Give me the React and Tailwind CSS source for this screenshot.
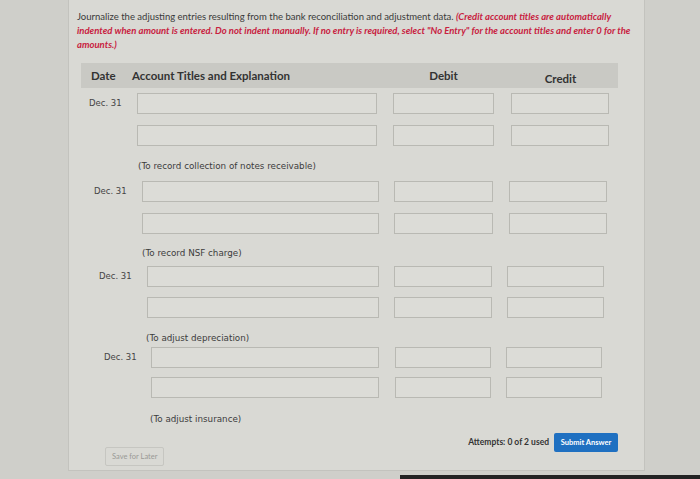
import React from 'react';

const entries = [
    {
        caption: '(To record collection of notes receivable)',
        top: 'mt-[5px]',
        gap: 'mt-[11px]',
        capTop: 'mt-[10px]',
        date: 'pl-[8px]',
        account: 'ml-[5px] w-[240px]',
        debit: 'ml-[9px] w-[101px]',
        credit: 'ml-[8px] w-[98px]',
        indent: 'pl-[6px]',
    },
    {
        caption: '(To record NSF charge)',
        top: 'mt-[11px]',
        gap: 'mt-[11px]',
        capTop: 'mt-[9px]',
        date: 'pl-[13px]',
        account: 'ml-[10px] w-[237px]',
        debit: 'ml-[10px] w-[99px]',
        credit: 'ml-[6px] w-[98px]',
        indent: 'pl-[10px]',
    },
    {
        caption: '(To adjust depreciation)',
        top: 'mt-[9px]',
        gap: 'mt-[10px]',
        capTop: 'mt-[10px]',
        date: 'pl-[18px]',
        account: 'ml-[15px] w-[232px]',
        debit: 'ml-[10px] w-[98px]',
        credit: 'ml-[4px] w-[97px]',
        indent: 'pl-[14px]',
    },
    {
        caption: '(To adjust insurance)',
        top: 'mt-[5px]',
        gap: 'mt-[9px]',
        capTop: 'mt-[11px]',
        date: 'pl-[23px]',
        account: 'ml-[19px] w-[228px]',
        debit: 'ml-[11px] w-[96px]',
        credit: 'ml-[3px] w-[96px]',
        indent: 'pl-[18px]',
    },
];

const Field = ({ className }) => (
    <div className={`h-[21px] border border-[#b9b9b3] bg-[#dcdcd7] ${className}`} />
);

const Row = ({ entry, date }) => (
    <div className="grid grid-cols-[51px_252px_119px_115px] h-[21px] items-center">
        <div className={`${entry.date} whitespace-nowrap text-[8.5px] text-[#444] font-['DejaVu_Sans',sans-serif]`}>
            {date}
        </div>
        <div><Field className={entry.account} /></div>
        <div><Field className={entry.debit} /></div>
        <div><Field className={entry.credit} /></div>
    </div>
);

const Entry = ({ entry }) => (
    <div className={entry.top}>
        <Row entry={entry} date="Dec. 31" />
        <div className={entry.gap}>
            <Row entry={entry} date="" />
        </div>
        <div className={`${entry.capTop} h-[14px] leading-[14px] ml-[51px]`}>
            <span className={`${entry.indent} whitespace-nowrap text-[8.75px] text-[#3c3c3c] font-['DejaVu_Sans',sans-serif]`}>
                {entry.caption}
            </span>
        </div>
    </div>
);

export default function App() {
    return (
        <div className="w-[700px] h-[479px] overflow-hidden bg-[#cfcfca] flex flex-col font-['Lato',sans-serif]">
            <div className="ml-[68px] w-[577px] h-[471px] bg-[#d9d9d4] border-x border-b border-[#c3c3be] pl-[8px] pt-[10px]">
                <p className="text-[9.5px] leading-[14px] text-[#3a3a3a] pr-[8px]">
                    Journalize the adjusting entries resulting from the bank reconciliation and adjustment data.{' '}
                    <span className="text-[#c8213f] font-bold italic">
                        (Credit account titles are automatically indented when amount is entered. Do not indent manually. If no entry is required, select "No Entry" for the account titles and enter 0 for the amounts.)
                    </span>
                </p>

                <div className="ml-[4px] w-[537px] mt-[11px]">
                    <div className="grid grid-cols-[51px_252px_119px_115px] h-[25px] items-center bg-[#c9c9c4] text-[11.5px] font-bold text-[#333]">
                        <div className="pl-[10px]">Date</div>
                        <div>Account Titles and Explanation</div>
                        <div className="text-center">Debit</div>
                        <div className="text-center pt-[6px]">Credit</div>
                    </div>

                    {entries.map((entry, i) => (
                        <Entry key={i} entry={entry} />
                    ))}

                    <div className="mt-[10px] flex items-start justify-between">
                        <button className="ml-[24px] mt-[14px] h-[19px] px-[6px] border border-[#c6c6c1] rounded-[2px] text-[7.5px] text-[#9a9a96]">
                            Save for Later
                        </button>
                        <div className="flex items-center gap-[5px]">
                            <span className="text-[8.5px] font-bold text-[#333]">Attempts: 0 of 2 used</span>
                            <button className="h-[19px] w-[64px] bg-[#1f70c1] rounded-[2px] text-[7.5px] font-bold text-white">
                                Submit Answer
                            </button>
                        </div>
                    </div>
                </div>
            </div>
            <div className="flex-1 flex items-end justify-end">
                <div className="w-[300px] h-[4px] bg-[#232323]" />
            </div>
        </div>
    );
}
